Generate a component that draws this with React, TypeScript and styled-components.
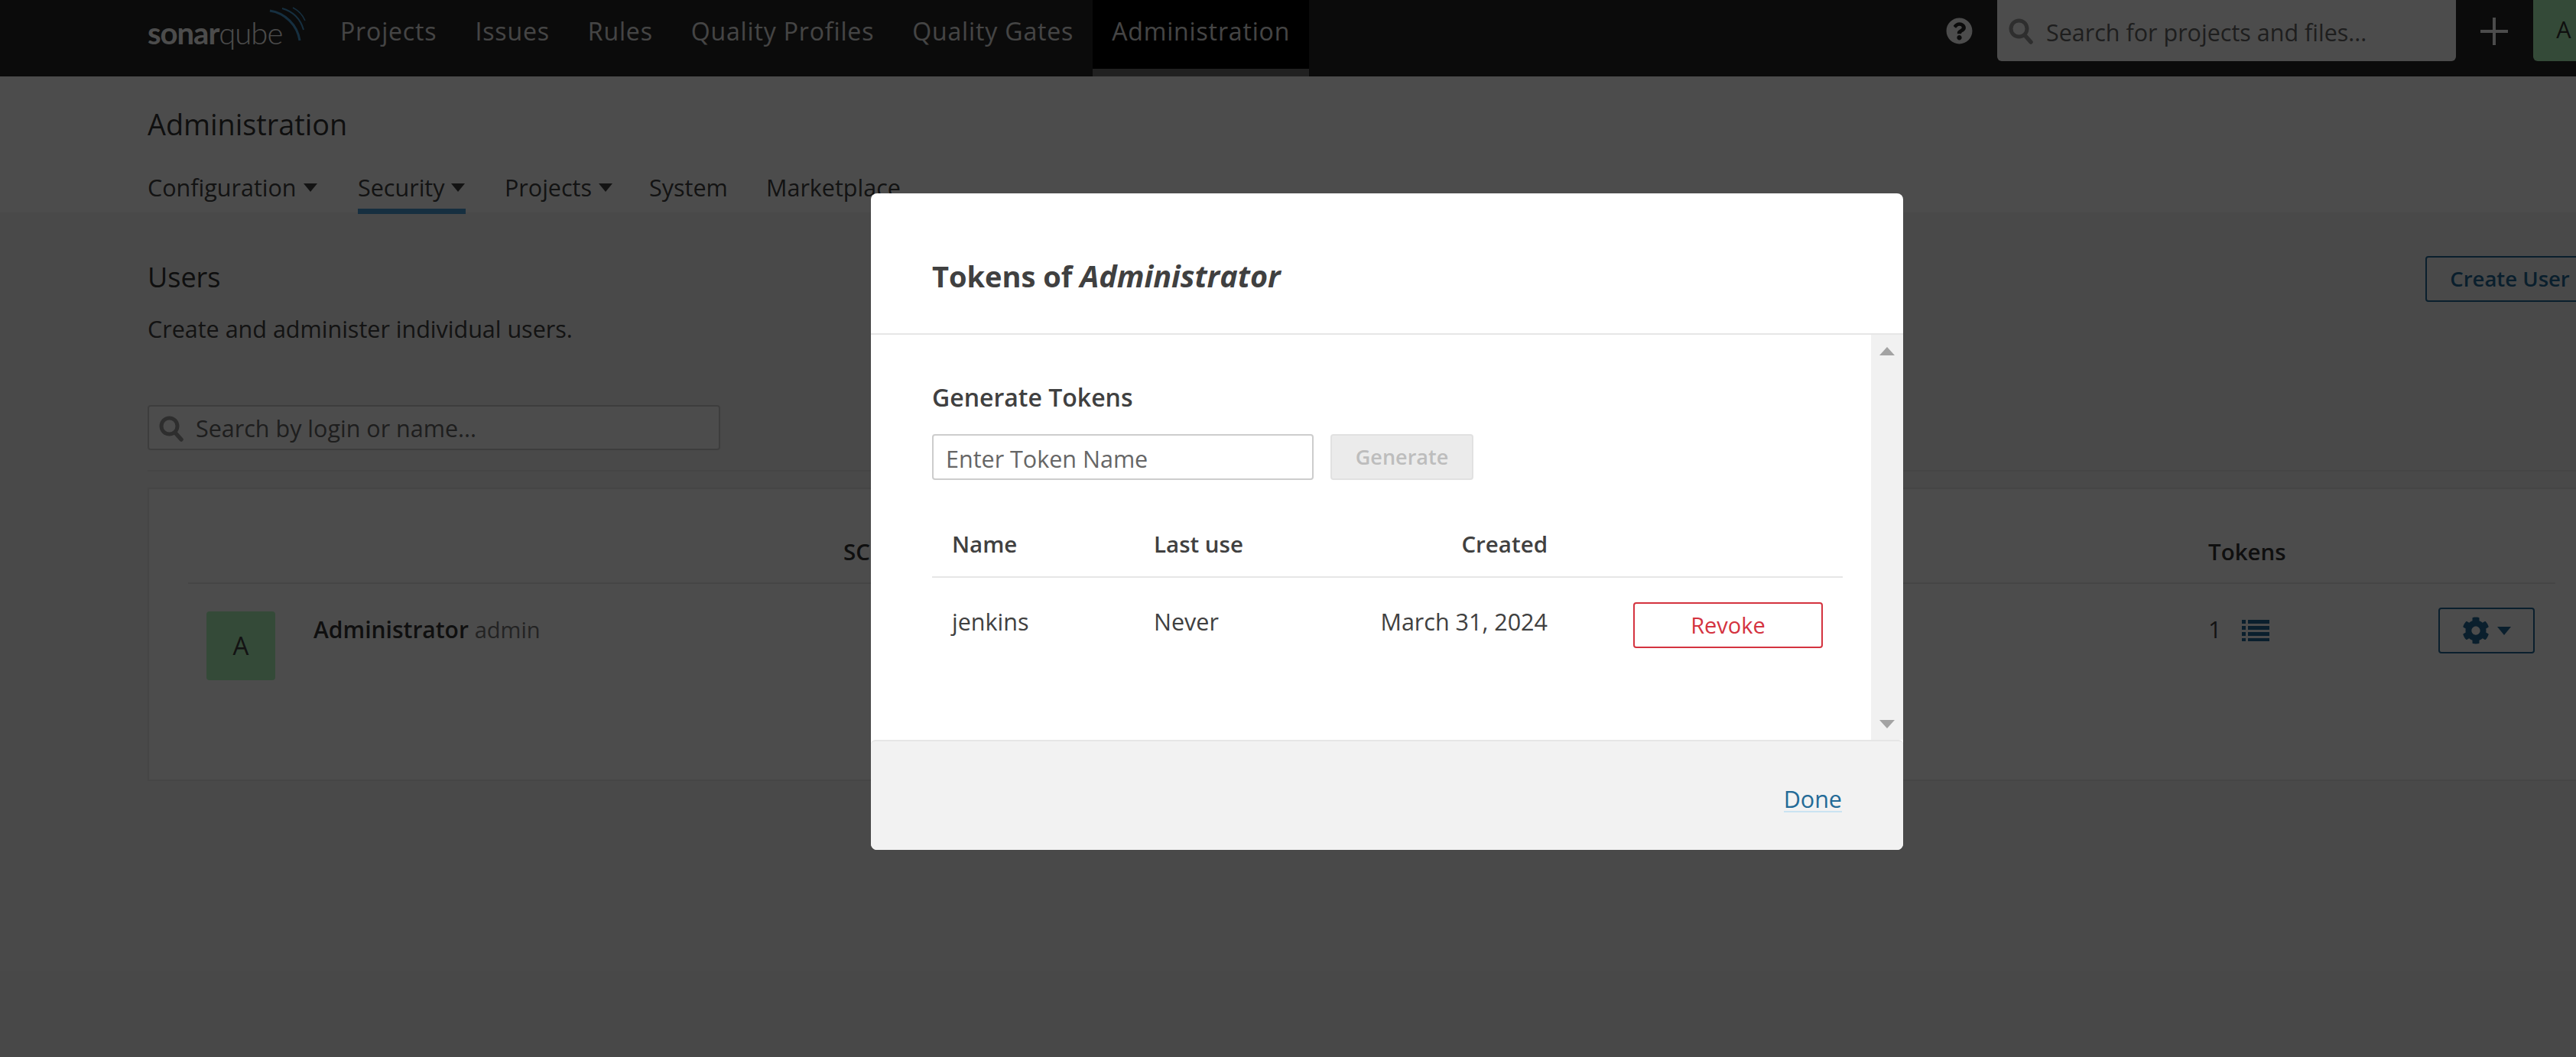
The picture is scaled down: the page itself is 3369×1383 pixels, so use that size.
import React from 'react'
import styled, { createGlobalStyle } from 'styled-components'
import { FaCog, FaQuestionCircle } from 'react-icons/fa'

const GlobalStyle = createGlobalStyle`
  html, body {
    margin: 0;
    padding: 0;
    width: 3369px;
    height: 1383px;
    overflow: hidden;
    background: #f3f3f3;
  }
  * { box-sizing: border-box; }
  body {
    font-family: "Open Sans", "Noto Sans", "Liberation Sans", sans-serif;
    font-size: 30.5px;
    line-height: 40px;
    color: #404040;
  }
`

const Page = styled.div`
  position: relative;
  width: 3628px;
  height: 1383px;
`

const Inner = styled.div`
  padding: 0 235px 0 193px;
`

const TopBar = styled.header`
  height: 100px;
  background: #262626;
`

const TopInner = styled(Inner)`
  display: flex;
  height: 100%;
`

const Logo = styled.div`
  position: relative;
  width: 206px;
  height: 80px;
  padding-top: 21px;
  font-family: "Lato", "Open Sans", sans-serif;
  font-size: 40px;
  line-height: 44px;
  letter-spacing: -1px;
  color: #fff;
  b { font-weight: 700; }
  span { font-weight: 300; }
`

const LogoArcs = styled.svg`
  position: absolute;
  left: 155px;
  top: 5px;
`

const NavList = styled.nav`
  display: flex;
  margin-left: 21px;
`

const NavItem = styled.a<{ $active?: boolean }>`
  height: 100px;
  padding: 21px 25px 0;
  font-size: 32px;
  letter-spacing: 0.85px;
  color: #e6e6e6;
  background: ${({ $active }) => ($active ? '#000' : 'transparent')};
  border-bottom: 10px solid ${({ $active }) => ($active ? '#6e6e6e' : 'transparent')};
`

const TopRight = styled.div`
  display: flex;
  margin-left: auto;
`

const HelpLink = styled.a`
  display: flex;
  margin: 23px 32px 0 0;
  color: #fff;
  font-size: 35px;
  line-height: 0;
`

const GlobalSearch = styled.div`
  display: flex;
  align-items: flex-start;
  gap: 17px;
  width: 600px;
  height: 80px;
  padding: 22px 0 0 15px;
  background: #fff;
  border-radius: 0 0 6px 6px;
  color: #666;
`

const SearchGlyph = styled.svg`
  flex: none;
  margin-top: 2px;
`

const PlusButton = styled.svg`
  margin: 22px 32px 0 31px;
`

const HeadAvatar = styled.div`
  width: 80px;
  height: 80px;
  padding: 18px 0 0 0;
  text-align: center;
  background: #aef7bb;
  border-radius: 0 0 0 6px;
  color: #333;
`

const SubHeader = styled.section`
  height: 178px;
  background: #fff;
`

const PageTitle = styled.h1`
  margin: 0;
  padding-top: 43px;
  font-size: 37.8px;
  font-weight: 400;
  line-height: 40px;
  color: #333;
`

const Tabs = styled.div`
  display: flex;
  margin-top: 42px;
`

const Tab = styled.a<{ $width: number; $active?: boolean }>`
  position: relative;
  flex: none;
  width: ${({ $width }) => $width}px;
  color: #404040;
  &::after {
    content: '';
    display: ${({ $active }) => ($active ? 'block' : 'none')};
    position: absolute;
    left: 0;
    width: 141px;
    bottom: -15px;
    height: 7px;
    background: #4b9fd5;
  }
`

const Caret = styled.i<{ $color?: string; $gap?: number }>`
  display: inline-block;
  width: 0;
  height: 0;
  margin-left: ${({ $gap }) => $gap ?? 9}px;
  vertical-align: 6px;
  border-left: 9px solid transparent;
  border-right: 9px solid transparent;
  border-top: 11px solid ${({ $color }) => $color || '#404040'};
`

const Main = styled(Inner)``

const UsersHead = styled.div`
  display: flex;
  justify-content: space-between;
  padding-top: 57px;
`

const SectionTitle = styled.h2`
  margin: 8px 0 0;
  font-size: 36px;
  font-weight: 400;
  line-height: 40px;
  color: #333;
`

const SectionNote = styled.p`
  margin: 27px 0 0;
  color: #404040;
`

const OutlineButton = styled.button<{ $color?: string }>`
  display: inline-flex;
  align-items: center;
  justify-content: center;
  height: 60px;
  padding: 0;
  font: inherit;
  font-size: 27.5px;
  font-weight: 600;
  color: ${({ $color }) => $color || '#236a97'};
  background: transparent;
  border: 2px solid ${({ $color }) => $color || '#236a97'};
  border-radius: 4px;
`

const CreateButton = styled(OutlineButton)`
  width: 221px;
`

const UserSearch = styled.div`
  display: flex;
  align-items: center;
  gap: 16px;
  width: 749px;
  height: 59px;
  margin-top: 80px;
  padding: 0 0 0 13px;
  background: #fff;
  border: 2px solid #cdcdcd;
  border-radius: 4px;
  color: #666;
`

const Divider = styled.div`
  height: 2px;
  margin-top: 26px;
  background: #e6e6e6;
`

const Card = styled.div`
  height: 384px;
  margin-top: 21px;
  padding: 0 51px;
  background: #fff;
  border: 2px solid #e6e6e6;
  border-right: 0;
`

const UsersHeaderRow = styled.div`
  display: grid;
  grid-template-columns: 857px 1785px 452px;
  height: 124px;
  padding-top: 62px;
  border-bottom: 2px solid #e6e6e6;
  font-size: 29.5px;
  font-weight: 600;
  color: #333;
`

const UsersRow = styled.div`
  display: grid;
  grid-template-columns: 2642px 452px;
  padding-top: 36px;
`

const UserCell = styled.div`
  display: flex;
  padding-left: 24px;
`

const UserAvatar = styled.div`
  width: 90px;
  height: 90px;
  line-height: 90px;
  text-align: center;
  font-size: 33px;
  background: #aef7bb;
  border-radius: 4px;
`

const UserName = styled.div`
  margin: 4px 0 0 50px;
  font-size: 30px;
  font-weight: 600;
  color: #333;
  small {
    font-size: 29px;
    font-weight: 400;
    color: #777;
  }
`

const TokensCell = styled.div`
  display: flex;
  justify-content: space-between;
`

const TokenCount = styled.div`
  display: flex;
  gap: 27px;
  margin-top: 3px;
  svg { margin-top: 8px; }
`

const ActionsButton = styled(OutlineButton)`
  gap: 10px;
  width: 126px;
  margin: -5px 25px 0 0;
  font-size: 36px;
`

const Overlay = styled.div`
  position: absolute;
  inset: 0;
  display: flex;
  justify-content: center;
  padding-top: 253px;
  background: rgba(0, 0, 0, 0.7);
`

const Modal = styled.div`
  display: flex;
  flex-direction: column;
  width: 1350px;
  height: 859px;
  background: #fff;
  border-radius: 8px;
  overflow: hidden;
`

const ModalHeader = styled.div`
  height: 185px;
  padding: 86px 0 0 80px;
  border-bottom: 2px solid #e6e6e6;
`

const ModalHeading = styled.h2`
  margin: 0;
  font-size: 38px;
  font-weight: 700;
  line-height: 44px;
  color: #404040;
  em { font-size: 39.5px; }
`

const ModalBody = styled.div`
  display: flex;
  height: 530px;
`

const ModalContent = styled.div`
  flex: 1;
  padding: 62px 37px 0 80px;
`

const FormTitle = styled.h3`
  margin: 0 0 28px;
  font-size: 32px;
  font-weight: 600;
  line-height: 40px;
  color: #404040;
`

const TokenForm = styled.div`
  display: flex;
  gap: 22px;
`

const TokenInput = styled.div`
  width: 499px;
  height: 60px;
  padding: 10px 0 0 16px;
  border: 2px solid #cdcdcd;
  border-radius: 4px;
  color: #666;
`

const GenerateButton = styled.div`
  width: 187px;
  height: 60px;
  line-height: 56px;
  text-align: center;
  font-size: 27px;
  font-weight: 600;
  color: #bdbdbd;
  background: #ebebeb;
  border: 2px solid #e1e1e1;
  border-radius: 4px;
`

const TokenRow = styled.div<{ $head?: boolean }>`
  display: grid;
  grid-template-columns: 290px 190px 325px 112px 248px;
  align-items: start;
  font-size: ${({ $head }) => ($head ? '29.5px' : 'inherit')};
  font-weight: ${({ $head }) => ($head ? 600 : 400)};
  ${({ $head }) =>
    $head
      ? `
    height: 128px;
    padding-top: 64px;
    border-bottom: 2px solid #e6e6e6;
  `
      : ''}
`

const TokenCell = styled.div<{ $first?: boolean; $right?: boolean; $body?: boolean }>`
  padding-left: ${({ $first }) => ($first ? '26px' : '0')};
  text-align: ${({ $right }) => ($right ? 'right' : 'left')};
  margin-top: ${({ $body }) => ($body ? '37px' : '0')};
  white-space: nowrap;
`

const RevokeButton = styled(OutlineButton)`
  grid-column: 5;
  width: 248px;
  margin-top: 32px;
  font-weight: 400;
  font-size: 29px;
`

const Scrollbar = styled.div`
  display: flex;
  flex-direction: column;
  justify-content: space-between;
  align-items: center;
  flex: none;
  width: 42px;
  padding: 16px 0 15px;
  background: #f1f1f1;
`

const ScrollArrow = styled.i<{ $down?: boolean }>`
  width: 0;
  height: 0;
  border-left: 10px solid transparent;
  border-right: 10px solid transparent;
  ${({ $down }) => ($down ? 'border-top' : 'border-bottom')}: 11px solid #a3a3a3;
`

const ModalFooter = styled.div`
  display: flex;
  justify-content: flex-end;
  height: 144px;
  padding: 55px 80px 0 0;
  background: #f2f2f2;
  border-top: 2px solid #e6e6e6;
  border-radius: 6px 6px 0 0;
`

const DoneLink = styled.a`
  height: 38px;
  color: #236a97;
  border-bottom: 2px solid #cae3f2;
`

const LensIcon = ({ color }: { color: string }) => (
  <SearchGlyph width="32" height="34" viewBox="0 0 32 34">
    <circle cx="13.5" cy="13.5" r="10.5" fill="none" stroke={color} strokeWidth="5" />
    <path d="M21 22l8 9" stroke={color} strokeWidth="5.5" strokeLinecap="round" />
  </SearchGlyph>
)

const ListIcon = () => (
  <svg width="36" height="28" viewBox="0 0 36 28">
    {[0, 8, 16, 24].map((y) => (
      <g key={y} fill="#236a97">
        <rect x="0" y={y} width="5" height="5" />
        <rect x="8" y={y} width="28" height="5" />
      </g>
    ))}
  </svg>
)

const navItems = ['Projects', 'Issues', 'Rules', 'Quality Profiles', 'Quality Gates']

export default function App() {
  return (
    <>
      <GlobalStyle />
      <Page>
        <TopBar>
          <TopInner>
            <Logo>
              <b>sonar</b>
              <span>qube</span>
              <LogoArcs width="52" height="52" viewBox="0 0 52 52" fill="none" stroke="#4b9fd5">
                <path d="M5 9C25 12 41 28 44 48" strokeWidth="3" />
                <path d="M21 6C35 10 45 20 49 34" strokeWidth="2" />
                <path d="M35 5C43 9 48 15 51 22" strokeWidth="1.5" />
              </LogoArcs>
            </Logo>
            <NavList>
              {navItems.map((item) => (
                <NavItem key={item}>{item}</NavItem>
              ))}
              <NavItem $active>Administration</NavItem>
            </NavList>
            <TopRight>
              <HelpLink>
                <FaQuestionCircle />
              </HelpLink>
              <GlobalSearch>
                <LensIcon color="#999" />
                Search for projects and files...
              </GlobalSearch>
              <PlusButton width="38" height="38" viewBox="0 0 38 38">
                <path d="M19 1v36M1 19h36" stroke="#fff" strokeWidth="4" />
              </PlusButton>
              <HeadAvatar>A</HeadAvatar>
            </TopRight>
          </TopInner>
        </TopBar>

        <SubHeader>
          <Inner>
            <PageTitle>Administration</PageTitle>
            <Tabs>
              <Tab $width={275}>
                Configuration
                <Caret />
              </Tab>
              <Tab $width={192} $active>
                Security
                <Caret />
              </Tab>
              <Tab $width={189}>
                Projects
                <Caret />
              </Tab>
              <Tab $width={153}>System</Tab>
              <Tab $width={300}>Marketplace</Tab>
            </Tabs>
          </Inner>
        </SubHeader>

        <Main>
          <UsersHead>
            <div>
              <SectionTitle>Users</SectionTitle>
              <SectionNote>Create and administer individual users.</SectionNote>
            </div>
            <CreateButton>Create User</CreateButton>
          </UsersHead>
          <UserSearch>
            <LensIcon color="#999" />
            Search by login or name...
          </UserSearch>
          <Divider />
          <Card>
            <UsersHeaderRow>
              <div />
              <div>SC</div>
              <div>Tokens</div>
            </UsersHeaderRow>
            <UsersRow>
              <UserCell>
                <UserAvatar>A</UserAvatar>
                <UserName>
                  Administrator <small>admin</small>
                </UserName>
              </UserCell>
              <TokensCell>
                <TokenCount>
                  1
                  <ListIcon />
                </TokenCount>
                <ActionsButton>
                  <FaCog />
                  <Caret $color="#236a97" $gap={0} />
                </ActionsButton>
              </TokensCell>
            </UsersRow>
          </Card>
        </Main>

        <Overlay>
          <Modal>
            <ModalHeader>
              <ModalHeading>
                Tokens of <em>Administrator</em>
              </ModalHeading>
            </ModalHeader>
            <ModalBody>
              <ModalContent>
                <FormTitle>Generate Tokens</FormTitle>
                <TokenForm>
                  <TokenInput>Enter Token Name</TokenInput>
                  <GenerateButton>Generate</GenerateButton>
                </TokenForm>
                <TokenRow $head>
                  <TokenCell $first>Name</TokenCell>
                  <TokenCell>Last use</TokenCell>
                  <TokenCell $right>Created</TokenCell>
                </TokenRow>
                <TokenRow>
                  <TokenCell $first $body>
                    jenkins
                  </TokenCell>
                  <TokenCell $body>Never</TokenCell>
                  <TokenCell $body $right>
                    March 31, 2024
                  </TokenCell>
                  <RevokeButton $color="#d4333f">Revoke</RevokeButton>
                </TokenRow>
              </ModalContent>
              <Scrollbar>
                <ScrollArrow />
                <ScrollArrow $down />
              </Scrollbar>
            </ModalBody>
            <ModalFooter>
              <DoneLink>Done</DoneLink>
            </ModalFooter>
          </Modal>
        </Overlay>
      </Page>
    </>
  )
}
